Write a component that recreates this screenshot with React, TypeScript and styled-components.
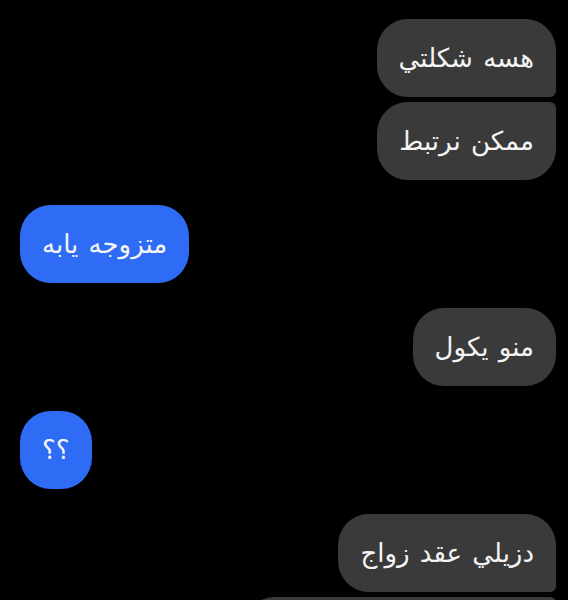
import styled, { createGlobalStyle } from "styled-components";

type Side = "me" | "them";
type Pos = "single" | "first" | "last";

interface Message {
  id: number;
  side: Side;
  pos: Pos;
  text: string;
}

const messages: Message[] = [
  { id: 1, side: "me", pos: "first", text: "هسه شكلتي" },
  { id: 2, side: "me", pos: "last", text: "ممكن نرتبط" },
  { id: 3, side: "them", pos: "single", text: "متزوجه يابه" },
  { id: 4, side: "me", pos: "single", text: "منو يكول" },
  { id: 5, side: "them", pos: "single", text: "؟؟" },
  { id: 6, side: "me", pos: "first", text: "دزيلي عقد زواج" },
  { id: 7, side: "me", pos: "last", text: "حتى اصدك شلون اعرف" },
];

const GlobalStyle = createGlobalStyle`
  html, body {
    margin: 0;
    padding: 0;
    background: #000;
  }
  body {
    font-family: "DejaVu Sans", "Noto Sans", sans-serif;
    overflow: hidden;
  }
`;

const Thread = styled.div`
  display: flex;
  flex-direction: column;
  padding: 19px 12px 0 20px;
  height: 600px;
  box-sizing: border-box;
  overflow: hidden;
`;

const radius = (side: Side, pos: Pos) => {
  const big = "31px";
  const small = "6px";
  if (pos === "single") return big;
  if (side === "me") {
    return pos === "first"
      ? `${big} ${big} ${small} ${big}`
      : `${big} ${small} ${big} ${big}`;
  }
  return pos === "first"
    ? `${big} ${big} ${big} ${small}`
    : `${small} ${big} ${big} ${big}`;
};

const Bubble = styled.div<{ $side: Side; $pos: Pos }>`
  align-self: ${(p) => (p.$side === "me" ? "flex-end" : "flex-start")};
  margin-top: ${(p) => (p.$pos === "last" ? "5px" : "25px")};
  &:first-child {
    margin-top: 0;
  }
  background: ${(p) => (p.$side === "me" ? "#3a3a3a" : "#2e6cf5")};
  color: #f4f4f4;
  border-radius: ${(p) => radius(p.$side, p.$pos)};
  padding: 20px 22px;
  font-size: 26px;
  line-height: 38px;
  word-spacing: 2px;
  min-width: 23px;
  text-align: center;
  white-space: nowrap;
`;

export default function App() {
  return (
    <>
      <GlobalStyle />
      <Thread>
        {messages.map((m) => (
          <Bubble key={m.id} $side={m.side} $pos={m.pos} dir="rtl">
            {m.text}
          </Bubble>
        ))}
      </Thread>
    </>
  );
}
